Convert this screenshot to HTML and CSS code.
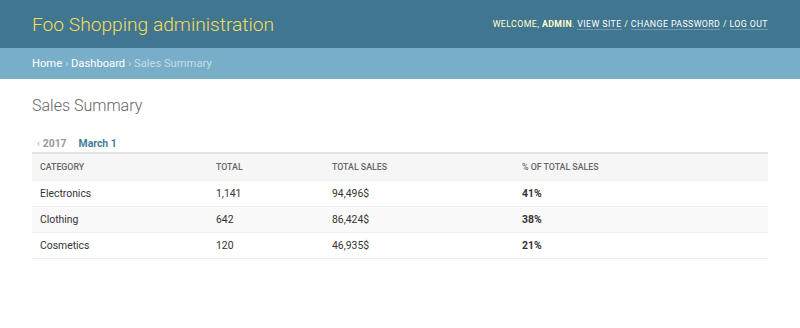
FILE: index.html
```html
<!DOCTYPE html>
<html lang="en">
<head>
    <meta charset="UTF-8" />
    <title>Sales Summary | Foo Shopping administration</title>
    <link rel="stylesheet" href="styles.css">
</head>
<body>

<!-- Header -->
<div id="header" class="header">
    <div class="branding">Foo Shopping administration</div>
    <div class="user-tools">
        Welcome, <strong>admin</strong>.
        <a href="#">View site</a> /
        <a href="#">Change password</a> /
        <a href="#">Log out</a>
    </div>
</div>

<!-- Breadcrumbs -->
<div class="breadcrumbs">
    <a href="#">Home</a> &rsaquo; <a href="#">Dashboard</a> &rsaquo; Sales Summary
</div>

<!-- Content -->
<div class="content">
    <h1>Sales Summary</h1>

    <ul class="toplinks">
        <li class="back"><a href="#"><span class="arrow">&lsaquo;</span> 2017</a></li>
        <li><a href="#" class="current">March 1</a></li>
    </ul>

    <table class="results">
        <thead>
            <tr>
                <th class="col-category">Category</th>
                <th class="col-total">Total</th>
                <th class="col-sales">Total sales</th>
                <th>% of total sales</th>
            </tr>
        </thead>
        <tbody>
            <tr>
                <td>Electronics</td>
                <td>1,141</td>
                <td>94,496$</td>
                <td><strong>41%</strong></td>
            </tr>
            <tr>
                <td>Clothing</td>
                <td>642</td>
                <td>86,424$</td>
                <td><strong>38%</strong></td>
            </tr>
            <tr>
                <td>Cosmetics</td>
                <td>120</td>
                <td>46,935$</td>
                <td><strong>21%</strong></td>
            </tr>
        </tbody>
    </table>
</div>

</body>
</html>
```

FILE: styles.css
```css
body, html {
    margin: 0;
    padding: 0;
    font-family: Roboto, 'Liberation Sans', sans-serif;
    font-size: 11px;
    color: #333;
    background: #fff;
}

a {
    text-decoration: none;
}

/* Header */
.header {
    height: 48px;
    padding: 0 32px;
    background: #417690;
    color: #ffc;
    display: flex;
    align-items: center;
    justify-content: space-between;
}

.branding {
    font-size: 19.2px;
    font-weight: 300;
    color: #f5dd5d;
}

.user-tools {
    font-size: 8.8px;
    letter-spacing: 0.4px;
    text-transform: uppercase;
    color: #ffc;
}

.user-tools strong {
    font-weight: 700;
    color: #ffc;
}

.user-tools a {
    color: #fff;
    border-bottom: 1px solid rgba(255, 255, 255, 0.25);
}

/* Breadcrumbs */
.breadcrumbs {
    height: 31px;
    line-height: 31px;
    padding: 0 32px;
    background: #79aec8;
    color: #c4dce8;
    font-size: 11.2px;
}

.breadcrumbs a {
    color: #fff;
}

/* Content */
.content {
    padding: 17px 32px;
}

h1 {
    margin: 0 0 15px;
    font-size: 16px;
    font-weight: 300;
    color: #666;
    line-height: 20px;
}

.toplinks {
    list-style: none;
    margin: 0;
    padding: 5px 5px 0;
    height: 16px;
    display: flex;
    gap: 12px;
    font-size: 10.4px;
    font-weight: 700;
    line-height: 16px;
    border-bottom: 2px solid #e4e4e4;
}

.toplinks a {
    color: #999;
}

.toplinks .arrow {
    font-weight: 400;
    color: #aaa;
}

.toplinks a.current {
    color: #447e9b;
}

/* Table */
.results {
    width: 100%;
    border-collapse: collapse;
    font-size: 10.4px;
}

.results th {
    background: #f6f6f6;
    color: #666;
    font-size: 8.8px;
    font-weight: 500;
    text-transform: uppercase;
    text-align: left;
    padding: 0 8px;
    height: 26px;
    border-bottom: 1px solid #eee;
}

.col-category { width: 160px; }
.col-total { width: 100px; }
.col-sales { width: 174px; }

.results td {
    padding: 0 8px;
    height: 25px;
    border-bottom: 1px solid #eee;
    color: #333;
}

.results tbody tr:nth-child(even) {
    background: #f9f9f9;
}

.results td strong {
    font-weight: 700;
}
```
